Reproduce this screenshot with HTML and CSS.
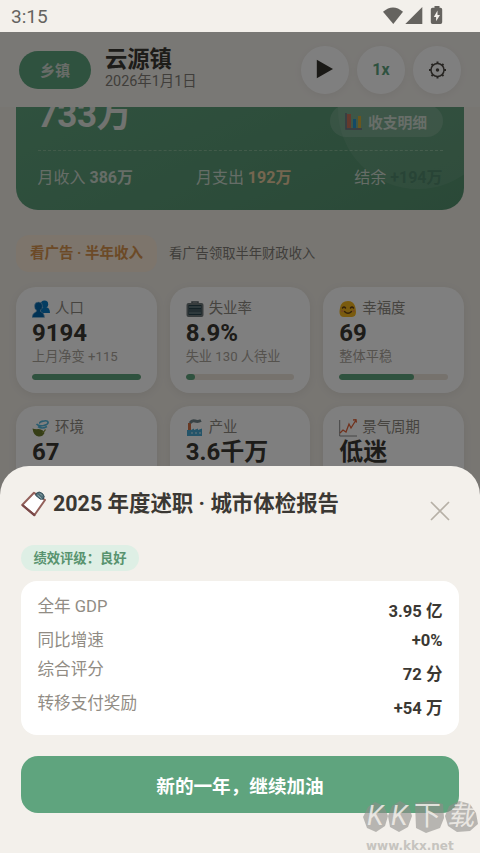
FILE: index.html
```html
<!DOCTYPE html>
<html lang="zh-CN">
<head>
<meta charset="utf-8">
<title>云源镇</title>
<link rel="stylesheet" href="styles.css">
</head>
<body>
<div class="phone">
  <div class="status">
    <span>3:15</span>
    <svg class="status-icons" width="61" height="20" viewBox="0 0 61 20">
      <path d="M0 5.8Q10-2.8 20 5.8L10.3 18Z"/><path d="M22.3 18L39.3 1V18Z"/>
      <path d="M51.5 0h5v1.7h1q1.7 0 1.7 1.7v12.9q0 1.7-1.7 1.7h-8q-1.7 0-1.7-1.7V3.400q0-1.700 1.700-1.700h2Z"/>
      <path class="bolt" d="M54.500 4.500L50.800 11h2.300v4.300L57 9h-2.500Z"/>
    </svg>
  </div>
  <div class="app">
    <header class="header">
      <span class="level">乡镇</span>
      <div class="place"><h1>云源镇</h1><p>2026年1月1日</p></div>
      <div class="controls">
        <button class="round"><svg width="20" height="22" viewBox="0 0 20 22"><path fill="#34322d" d="M1.800 0.700v18.600L18 10Z"/></svg></button>
        <button class="round speed">1x</button>
        <button class="round"><svg width="20" height="20" viewBox="0 0 20 20" fill="none" stroke="#4e4a44" stroke-width="1.500"><circle cx="10.500" cy="10" r="6.500"/><circle cx="10.500" cy="10" r="1" fill="#3d3a35"/><path stroke-width="2" d="M10.500 3.500v-2M10.500 18.500v-2M4 10H2M19 10h-2M5.900 5.400L4.500 4M16.500 16l-1.400-1.400M15.100 5.400L16.500 4M4.500 16l1.400-1.400"/></svg></button>
      </div>
    </header>
    <main class="content">
      <section class="hero">
        <div class="hero-top">
          <strong class="balance">733万</strong>
          <span class="detail"><svg width="18" height="17" viewBox="0 0 18 17"><path fill="none" stroke="#667" stroke-width="1.500" d="M1 0v16h16"/><path fill="#c4694f" d="M2 1h4v14H2z"/><path fill="#168bc9" d="M8 6h3v9H8z"/><path fill="#d1a72c" d="M13 3h3v12h-3z"/></svg>收支明细</span>
        </div>
        <div class="flow"><span>月收入 <b>386万</b></span><span>月支出 <b class="out">192万</b></span><span>结余 <b class="net">+194万</b></span></div>
      </section>
      <section class="ad"><span class="ad-button">看广告 · 半年收入</span><span>看广告领取半年财政收入</span></section>
      <section class="grid">
        <article class="card">
          <h2><svg width="18" height="18" viewBox="0 0 18 18"><g fill="#087ac4"><circle cx="12.500" cy="4.300" r="3.700"/><path d="M8 13q0-6 5-6t5 6Z"/></g><path fill="#0566ab" stroke="#9ac2dc" stroke-width=".6" d="M2.500 6a4 4 0 0 1 8 0Q10.500 9 8.500 10v1.500q4 1 4 6H0q0-4 4.300-6V10Q2.500 9 2.500 6Z"/></svg>人口</h2>
          <strong>9194</strong><p>上月净变 +115</p><div class="bar"><i style="width:100%"></i></div>
        </article>
        <article class="card">
          <h2><svg width="18" height="18" viewBox="0 0 18 18"><path fill="none" stroke="#546066" stroke-width="1.500" d="M6 4V2h6v2"/><rect x=".5" y="3" width="17" height="14" rx="2" fill="#6f787b"/><path fill="#27424c" d="M2.500 5h13v10h-13z"/><path stroke="#93a5a7" stroke-width="1" d="M3 7h12M3 13h12"/><path fill="#445b62" d="M3 9h12v3H3z"/></svg>失业率</h2>
          <strong>8.9%</strong><p>失业 130 人待业</p><div class="bar"><i style="width:9%"></i></div>
        </article>
        <article class="card">
          <h2><svg width="18" height="18" viewBox="0 0 18 18"><path fill="#f4b71c" d="M9 1q5 0 7 5 3 11-3 11H5Q-1 17 1 8q1-7 8-7Z"/><g fill="none" stroke="#654115" stroke-linecap="round" stroke-width="1.500"><path d="M3.500 8Q5 6 6.500 8M11.500 8q1.500-2 3 0M5.500 11.500q3.500 3.500 7 0"/></g><circle cx="3.300" cy="11" r="1.300" fill="#ee933f"/><circle cx="14.700" cy="11" r="1.300" fill="#ee933f"/></svg>幸福度</h2>
          <strong>69</strong><p>整体平稳</p><div class="bar"><i style="width:69%"></i></div>
        </article>
        <article class="card">
          <h2><svg width="18" height="18" viewBox="0 0 18 18"><path fill="#6c7d2c" d="M.5 9.500q3 1 6 .5 5 .5 6 4-2 4-6 3.500Q1.500 17 .5 9.500Z"/><path fill="none" stroke="#88943f" stroke-width="1.300" d="M10 13.500q2 0 3.500-3"/><path fill="none" stroke="#54b9de" stroke-width="1.700" d="M4.500 5q2 2.500 7 1.500 5-1.200 4.500-3.500-.7-2-5-.8Q7 3 8 4.500M6 7.500q4 3 9 0"/></svg>环境</h2>
          <strong>67</strong><p>空气良好</p><div class="bar"><i style="width:67%"></i></div>
        </article>
        <article class="card">
          <h2><svg width="18" height="18" viewBox="0 0 18 18"><path fill="#49a9d2" d="M1 17v-6h4l3-1.500V11l4-1.500V11l4-1.500V17Z"/><path fill="#d17347" d="M2 4h3v7H2Z"/><path fill="none" stroke="#71858b" stroke-width="3" d="M4 4q2-3 5-2t6-.5"/><path fill="#8ecde5" d="M5 13h2v2H5zM9 13h2v2H9zM13 13h2v2h-2z"/></svg>产业</h2>
          <strong>3.6千万</strong><p>平稳增长</p><div class="bar"><i style="width:36%"></i></div>
        </article>
        <article class="card">
          <h2><svg width="18" height="18" viewBox="0 0 18 18"><path fill="none" stroke="#888" stroke-width="1" d="M.7 1v16H18"/><path fill="none" stroke="#e26338" stroke-width="1.300" d="M1 14l3-3 3 2 3-8 2 4 5-8M14 1l3-.3.500 3"/></svg>景气周期</h2>
          <strong>低迷</strong><p>需求不足</p><div class="bar"><i style="width:30%"></i></div>
        </article>
      </section>
    </main>
    <div class="scrim"></div>
    <section class="sheet">
      <div class="sheet-head">
        <svg class="clip" width="26" height="26" viewBox="0 0 26 26"><path fill="#fff" stroke="#93615b" stroke-width="2" stroke-linejoin="round" d="M13 1.800L24 9 13.500 24 1.200 14Z"/><path stroke="#7a4848" stroke-width="2.200" stroke-linecap="round" d="M2 14.500L13.300 24.200"/><path fill="#506e77" stroke="#344f59" d="M15 2.500q3-3 6.500 0 3 3 .8 5.500l-3 .2-4.600-3.800Z"/><path fill="none" stroke="#9eb4b8" d="M16.500 4l4 3.500M19 2.500l2 2"/></svg>
        <h2>2025 年度述职 · 城市体检报告</h2>
        <svg class="close" width="20" height="20" viewBox="0 0 20 20"><path stroke="#b6b0a6" stroke-width="1.700" d="M1 1l18 18M19 1L1 19"/></svg>
      </div>
      <span class="rating">绩效评级：良好</span>
      <dl class="report">
        <div><dt>全年 GDP</dt><dd>3.95 亿</dd></div>
        <div class="compact"><dt>同比增速</dt><dd>+0%</dd></div>
        <div><dt>综合评分</dt><dd>72 分</dd></div>
        <div><dt>转移支付奖励</dt><dd>+54 万</dd></div>
      </dl>
      <button class="continue">新的一年，继续加油</button>
    </section>
  </div>
  <div class="watermark">
    <svg width="116" height="34" viewBox="0 0 116 34"><path fill="#8f8e8a" fill-opacity=".6" d="M5 7l7-5 9 4 4 10-3 10-9 6-9-4-4-11ZM29 6l8-5 9 5 3 10-4 11-9 5-9-5-2-11ZM52 3l16-2 12 3 1 14-4 10-14 5-10-5ZM86 6l10-5 11 3 6 9 2 11-8 7-13 1-9-6-3-10Z"/></svg>
    <span class="mark"><i>K</i><i>K</i><i>下</i><i>载</i></span><span class="url">www.kkx.net</span>
  </div>
</div>
</body>
</html>
```

FILE: styles.css
```css
* { box-sizing: border-box; }
body, h1, h2, p, dl, dd { margin: 0; }
body { background: #f3f0eb; font-family: Roboto, "Noto Sans CJK SC", sans-serif; color: #3b3833; }
button { border: 0; padding: 0; font: inherit; }
.phone { position: relative; display: flex; flex-direction: column; width: 480px; height: 853px; overflow: hidden; }
.status { height: 32px; flex: none; display: flex; justify-content: space-between; align-items: center; padding: 0 35px 0 11px; font-size: 19px; color: #65635f; }
.status-icons { fill: #65635f; margin: 0 1px 0 0; }
.status-icons .bolt { fill: #f3f0eb; }
.app { position: relative; display: flex; flex-direction: column; flex: 1; min-height: 0; overflow: hidden; background: #f0ece5; }
.header { height: 75px; flex: none; display: flex; align-items: center; padding: 0 19px; background: #f3f0eb; }
.level { width: 72px; height: 38px; border-radius: 19px; background: #5fa47e; color: #d0d9d1; display: flex; justify-content: center; align-items: center; font-size: 15px; font-weight: 700; }
.place { margin-left: 14px; }
.place h1 { font-size: 22.3px; line-height: 25px; }
.place p { font-size: 14.4px; line-height: 20px; color: #817d76; }
.controls { display: flex; gap: 8px; margin-left: auto; }
.round { width: 48px; height: 48px; border-radius: 50%; background: #fff; box-shadow: 0 2px 8px #0000000d; display: flex; align-items: center; justify-content: center; }
.speed { font-size: 16px; font-weight: 700; color: #5fa47e; }
.content { flex: 1; min-height: 0; overflow: hidden; padding: 0 16px; }
.hero { position: relative; height: 170px; margin-top: -67px; padding: 57px 21.500px 0; overflow: hidden; border-radius: 22px; background: linear-gradient(155deg, #62a680, #55926f); color: #cddacf; }
.hero::after { content: ""; position: absolute; width: 160px; height: 160px; border-radius: 50%; top: -11px; right: -34px; background: #ffffff12; }
.hero-top { height: 54px; display: flex; justify-content: space-between; border-bottom: 1px dashed #85b795; }
.balance { font-size: 35px; line-height: 38px; letter-spacing: -.3px; color: #e2e7e1; }
.detail { width: 113px; height: 32px; margin-top: 8px; border-radius: 16px; display: flex; align-items: center; justify-content: center; gap: 5px; background: #ffffff25; font-size: 14.8px; font-weight: 700; }
.flow { display: flex; justify-content: space-between; padding-top: 15px; font-size: 16px; line-height: 24px; }
.flow .out { color: #e8cda0; }
.flow .net { color: #438062; }
.ad { height: 37px; margin-top: 25px; display: flex; align-items: center; gap: 12px; font-size: 13.300px; line-height: 18px; color: #817d76; }
.ad-button { width: 141px; height: 37px; border-radius: 13px; background: #faead8; display: flex; align-items: center; justify-content: center; color: #d8944e; font-size: 14.500px; font-weight: 700; }
.grid { display: grid; grid-template-columns: repeat(3, 1fr); gap: 13px; margin-top: 15px; }
.card { height: 106px; padding: 11px 16px; border-radius: 20px; background: #fff; box-shadow: 0 2px 10px #00000010; }
.card h2 { display: flex; align-items: center; gap: 5px; height: 22px; line-height: 22px; font-size: 14.400px; font-weight: 400; color: #8d8880; white-space: nowrap; }
.card strong { display: block; font-size: 24px; line-height: 27px; white-space: nowrap; }
.card p { font-size: 13.2px; line-height: 20px; color: #aaa49b; white-space: nowrap; }
.bar { height: 6px; margin-top: 7px; border-radius: 3px; overflow: hidden; background: #ece4da; }
.bar i { display: block; height: 6px; border-radius: 3px; background: #5fa47e; }
.scrim { position: absolute; inset: 0; background: #00000080; }
.sheet { position: absolute; left: 0; right: 0; bottom: 0; height: 387.500px; padding: 21px 21px 0; border-radius: 29px 29px 0 0; background: #f3f0eb; }
.sheet-head { display: flex; align-items: center; height: 34px; }
.sheet-head h2 { margin-left: 6px; font-size: 21.450px; line-height: 32px; white-space: nowrap; }
.clip { flex: none; }
.close { margin: 14px 9px 0 auto; }
.rating { display: flex; align-items: center; justify-content: center; width: 118px; height: 26px; margin-top: 24px; border-radius: 13px; background: #deefe5; color: #58936f; font-size: 13.300px; font-weight: 700; }
.report { height: 154px; margin-top: 10px; padding: 13px 16.500px 11px; border-radius: 16px; background: #fff; font-size: 16.600px; }
.report div { height: 34px; display: flex; justify-content: space-between; line-height: 26px; }
.report .compact { height: 29px; }
.report dt { color: #918c84; }
.report dd { margin-top: 5px; font-weight: 700; }
.report .compact dd { margin-top: 0; }
.continue { display: block; width: 100%; height: 57px; margin-top: 21px; border-radius: 17px; background: #5fa47e; color: #fff; font-size: 18.600px; font-weight: 700; }
.watermark { position: absolute; left: 363px; top: 800px; width: 117px; height: 53px; }
.watermark span { position: absolute; white-space: nowrap; }
.mark { left: 4px; top: -1px; display: grid; grid-template-columns: 24px 23px 33px 32px; font-size: 27px; line-height: 34px; font-weight: 400; color: #f3f0ebd9; }
.mark i:nth-child(3) { font-style: normal; }
.url { left: 3px; top: 39px; font: 700 12px/14px "DejaVu Sans", sans-serif; color: #c6c4bf; }
```
